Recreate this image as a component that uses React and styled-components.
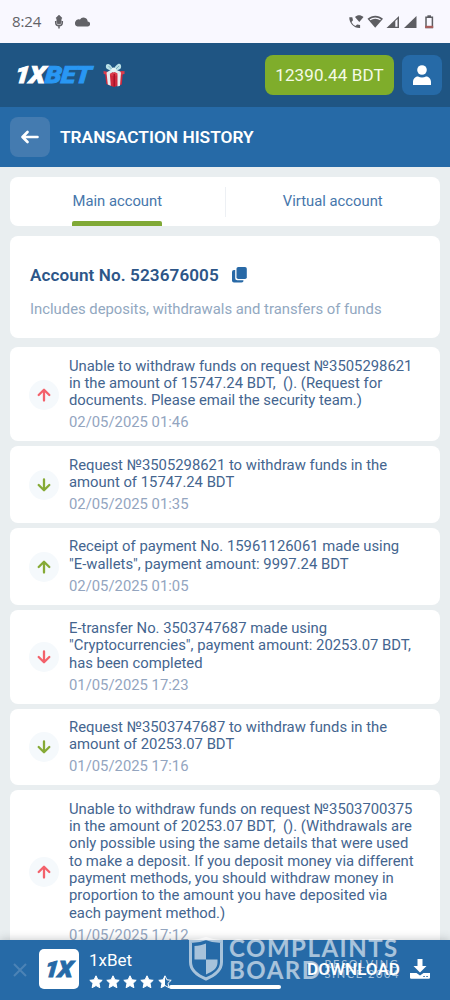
import React from "react";
import styled, { createGlobalStyle } from "styled-components";

const GlobalStyle = createGlobalStyle`
  * { box-sizing: border-box; }
  body { margin: 0; font-family: Roboto, "Liberation Sans", sans-serif; }
`;

const Screen = styled.div`
  position: relative;
  display: flex;
  flex-direction: column;
  width: 450px;
  height: 1000px;
  overflow: hidden;
  background: #e9eef0;
`;

const StatusBar = styled.div`
  flex: none;
  display: flex;
  align-items: center;
  height: 43px;
  padding: 1px 15px 0 12px;
  background: #f9f8ff;
  color: #626267;
`;

const Clock = styled.span`
  width: 42px;
  font: 400 15px/20px "Open Sans", sans-serif;
  letter-spacing: -0.1px;
  padding-bottom: 2px;
`;

const StatusIcons = styled.div`
  display: flex;
  align-items: center;
  gap: ${(p) => p.$gap}px;
  margin-left: ${(p) => (p.$end ? "auto" : "0")};
`;

const Header = styled.header`
  flex: none;
  display: flex;
  align-items: center;
  height: 64px;
  padding: 0 8px 0 15px;
  background: #1f5583;
`;

const Brand = styled.div`
  width: 88px;
  color: #fff;
  font-size: 23.5px;
  font-style: italic;
  font-weight: 900;
  line-height: 28px;
  letter-spacing: -0.4px;
  -webkit-text-stroke: 0.9px currentColor;
  white-space: nowrap;
  transform: scaleX(1.12) skewX(-5deg);
  transform-origin: left center;
`;

const BrandAccent = styled.span`
  color: #2997f3;
`;

const Balance = styled.div`
  display: flex;
  align-items: center;
  justify-content: center;
  width: 129px;
  height: 40px;
  margin-left: auto;
  border-radius: 8px;
  background: #7fad2b;
  color: #f4fae6;
  font-size: 17px;
  letter-spacing: 0.1px;
`;

const SquareButton = styled.button`
  display: flex;
  align-items: center;
  justify-content: center;
  width: 40px;
  height: 40px;
  margin: ${(p) => p.$margin};
  padding: 0;
  border: 0;
  border-radius: 8px;
  background: ${(p) => p.$bg};
`;

const TitleBar = styled.div`
  flex: none;
  display: flex;
  align-items: center;
  height: 60px;
  padding: 0 10px;
  background: #266aa7;
`;

const Title = styled.h1`
  margin: 0;
  color: #fff;
  font-size: 17.3px;
  font-weight: 600;
`;

const Content = styled.main`
  flex: 1;
  min-height: 0;
  padding: 10px 10px 0;
  overflow: hidden;
`;

const Tabs = styled.div`
  display: flex;
  height: 49px;
  border-radius: 8px;
  background: #fff;
`;

const Tab = styled.div`
  display: flex;
  flex: 1;
  flex-direction: column;
  align-items: center;
  color: #4676ab;
  font-size: 14.8px;
  line-height: 49px;
`;

const TabLabel = styled.span`
  position: relative;
  height: 49px;
  &::after {
    content: "";
    position: absolute;
    right: 0;
    bottom: 0;
    left: 0;
    height: 5px;
    border-radius: 2px 2px 0 0;
    background: ${(p) => (p.$active ? "#80a936" : "transparent")};
  }
`;

const Divider = styled.i`
  width: 1px;
  height: 30px;
  margin-top: 10px;
  background: #edf0f4;
`;

const AccountCard = styled.section`
  height: 102px;
  margin: 10px 0 9px;
  padding: 29px 20px 0;
  border-radius: 8px;
  background: #fff;
`;

const AccountNumber = styled.div`
  display: flex;
  align-items: center;
  gap: 13px;
  height: 20px;
  color: #2d5688;
  font-size: 17.1px;
  font-weight: 600;
  letter-spacing: 0.1px;
`;

const AccountNote = styled.div`
  margin-top: 14px;
  color: #92a8c1;
  font-size: 14.83px;
  line-height: 20px;
  white-space: nowrap;
`;

const List = styled.div`
  display: flex;
  flex-direction: column;
  gap: 5px;
`;

const Row = styled.article`
  display: flex;
  align-items: center;
  padding: 10.5px 0 9.5px 19px;
  border-radius: 8px;
  background: #fff;
`;

const Badge = styled.div`
  display: flex;
  flex: none;
  align-items: center;
  justify-content: center;
  width: 30px;
  height: 30px;
  margin-right: 10px;
  border-radius: 50%;
  background: #f5f9fc;
`;

const Message = styled.div`
  color: #44658f;
  font-size: 14.84px;
  line-height: 17.32px;
  white-space: pre;
`;

const Stamp = styled.div`
  margin-top: 4.8px;
  color: #93a5bf;
  font-size: 14.84px;
  line-height: 17.32px;
`;

const Banner = styled.footer`
  position: relative;
  flex: none;
  display: flex;
  align-items: flex-start;
  height: 60px;
  padding: 10px 20px 0 12px;
  background: #266aa7;
  box-shadow: 0 0 9px rgba(60, 65, 70, 0.32);
`;

const AppIcon = styled.div`
  display: flex;
  align-items: center;
  justify-content: center;
  width: 40px;
  height: 40px;
  margin: -1px 10px 0 11px;
  border-radius: 5px;
  background: #fff;
`;

const AppMark = styled.span`
  color: #266aa7;
  font-size: 22.5px;
  font-style: italic;
  font-weight: 900;
  line-height: 1;
  letter-spacing: -0.6px;
  -webkit-text-stroke: 0.9px currentColor;
  transform: scaleX(1.08) skewX(-5deg);
`;

const AppName = styled.div`
  height: 21px;
  color: #fff;
  font-size: 17px;
  line-height: 21px;
`;

const Stars = styled.div`
  display: flex;
  gap: 3.3px;
  margin-top: 4px;
  margin-left: -0.5px;
`;

const Download = styled.div`
  display: flex;
  align-items: center;
  gap: 10px;
  height: 38px;
  margin-left: auto;
  color: #fff;
  font-size: 17.1px;
  font-weight: 600;
`;

const HomeHandle = styled.div`
  position: absolute;
  left: 169px;
  bottom: 11px;
  width: 112px;
  height: 4px;
  border-radius: 2px;
  background: #fff;
`;

const Watermark = styled.div`
  position: absolute;
  left: 188px;
  top: -3px;
  display: flex;
  gap: 5px;
  color: #fff;
  opacity: 0.6;
`;

const WatermarkName = styled.div`
  font: 700 24px/21.5px Lato, sans-serif;
  letter-spacing: 1.5px;
  white-space: nowrap;
`;

const WatermarkLine = styled.div`
  display: flex;
`;

const WatermarkTag = styled.div`
  margin-left: 3px;
  font: 400 11px/10px Lato, sans-serif;
  letter-spacing: 1.55px;
`;

const WatermarkTagLine = styled.div`
  height: 10px;
  letter-spacing: ${(p) => p.$spacing}px;
`;

const Dismiss = () => (
  <svg width="16" height="16" viewBox="0 0 16 16" style={{ marginTop: 12 }}>
    <path d="M2 2l12 12M14 2L2 14" stroke="#4c83b6" strokeWidth="2" />
  </svg>
);

const Arrow = ({ up, color }) => (
  <svg width="14" height="14" viewBox="0 0 14 14" fill="none" stroke={color} strokeWidth="2.3" strokeLinecap="round" strokeLinejoin="round">
    <path d={up ? "M7 12.500V2M1.700 7L7 1.700L12.300 7" : "M7 1.500V12M1.700 7L7 12.300L12.300 7"} />
  </svg>
);

const Mic = () => (
  <svg width="10" height="14" viewBox="0 0 10 14" fill="none" stroke="#626267">
    <rect x="3" y="2" width="4" height="7" rx="2" fill="#626267" />
    <path d="M2.200 3.500L5 .8L7.800 3.500M1.700 6v1.500a3.300 3.200 0 0 0 6.600 0V6M5 10v3.500" strokeWidth="1.500" />
  </svg>
);

const Cloud = () => (
  <svg width="15" height="10" viewBox="0 0 15 10" fill="#626267">
    <path d="M2.500 9.500h10a2.500 2.500 0 0 0 .2-5A4.200 4.200 0 0 0 5 2.500 3.600 3.600 0 0 0 2.500 9.500z" />
  </svg>
);

const Signals = () => (
  <svg width="86" height="17" viewBox="0 0 86 17" fill="#5d5d62">
    <path d="M.3 3.300h3l.7 3-1.500 1.600c1 2 2 3 4 4l1.600-1.500 3 .7v3C5 14.500 0 9 .3 3.300z" />
    <path d="M6 3c2.500-2.300 5.500-2.300 8.500 0L10.300 8z" />
    <path d="M18.500 4.800c4.800-4.200 10.800-4.200 15.500 0L26.200 13.800z" />
    <path d="M21 5.800c3-2.300 7.500-2.300 10.500 0" fill="none" stroke="#f9f8ff" strokeWidth="1.200" />
    <path d="M37.500 14L50 2v12z" />
    <path d="M46.300 7L48.500 4.900v7.900h-2.200z" fill="#f9f8ff" />
    <path d="M55 14L67.500 2v12z" />
    <path d="M77 3.200h6.400v10.300h-6.400z" fill="none" stroke="#5d5d62" strokeWidth="1.500" />
    <path d="M78.400 1.300h3.600v2h-3.600z" />
    <path d="M76.200 11.800h8v2.300h-8z" fill="#a75d5b" />
  </svg>
);

const Gift = () => (
  <svg width="22" height="25" viewBox="0 0 22 25">
    <path d="M2 10l18-2-1.200 13.500-8 2.500-7.500-3z" fill="#cf293d" />
    <path d="M.5 8L10.500 10 21.500 8v3L10.800 13 .7 11z" fill="#dc3c4c" />
    <path d="M3.500 9.500l3.300.8 1 12.500-3-1.200zM14.500 10l3.500-.8-1 13.500-2.500.8z" fill="#e8edf2" />
    <path d="M10.500 11v13l1.500-.4V11z" fill="#a8142a" />
    <path d="M10.500 7.500C8-.5 2-.5 3 4.500 4 7.500 8 6.500 10.500 8.500c2.500-2 7-1 7.500-4C19-1 13-.500 10.500 7.500z" fill="#b9e0e6" />
    <path d="M10.500 7L4.500 10.500M10.500 7l6.500 3" stroke="#deeff2" strokeWidth="2.800" />
    <circle cx="10.700" cy="7" r="2.400" fill="#e5f5f6" />
    <path d="M5.500 3l3 3M16 3l-3 3" stroke="#7dafbf" />
  </svg>
);

const User = () => (
  <svg width="18" height="20" viewBox="0 0 18 20" fill="#fff">
    <circle cx="9" cy="5" r="4.800" />
    <path d="M0 20v-3c0-3 2-5.500 5-5.500 2.500 1.200 5.500 1.200 8 0 3 0 5 2.500 5 5.500v3z" />
  </svg>
);

const Back = () => (
  <svg width="18" height="14" viewBox="0 0 18 14" fill="none" stroke="#fff" strokeWidth="2.600" strokeLinecap="round" strokeLinejoin="round">
    <path d="M16.500 7H1.800M6.500 2L1.500 7 6.500 12" />
  </svg>
);

const Copy = () => (
  <svg width="15" height="16" viewBox="0 0 15 16" fill="#2869a6">
    <rect x="4.500" y="0" width="10.300" height="12" rx="1.800" />
    <path d="M3.200 3H2A2 2 0 0 0 0 5v8.500A2 2 0 0 0 2 15.500h7.500a2 2 0 0 0 2-2.200H5.200a2 2 0 0 1-2-2z" />
  </svg>
);

const STAR = "M7 .8l1.900 4 4.300.5-3.200 3 .9 4.400L7 10.500l-3.900 2.200.9-4.400-3.200-3 4.300-.5z";

const Star = ({ half }) => (
  <svg width="14" height="14" viewBox="0 0 14 14">
    <path d={STAR} fill={half ? "none" : "#fff"} stroke="#fff" strokeWidth="1" strokeLinejoin="round" />
    {half && <path d="M7 .8v9.700l-3.900 2.200.9-4.400-3.200-3 4.300-.5z" fill="#fff" />}
  </svg>
);

const DownloadIcon = () => (
  <svg width="20" height="20" viewBox="0 0 20 20" fill="#fff">
    <path d="M7.500 0h5v7H16.500L10 13.500 3.500 7h4z" />
    <path d="M0 14h6.500l3.500 2.500 3.500-2.500H20V18.500a1.300 1.300 0 0 1-1.300 1.300H1.300A1.300 1.300 0 0 1 0 18.500z" />
    <path d="M13.300 17.500h1.500M16.300 17.500h1.500" stroke="#266aa7" strokeWidth="1.200" />
  </svg>
);

const Shield = () => (
  <svg width="36" height="45" viewBox="0 0 36 45">
    <path d="M18 1.500C12 4 7 4.500 2.500 4.500V25c0 9 7 13.500 15.500 17 8.500-3.500 15.500-8 15.500-17V4.500C29 4.500 24 4 18 1.500z" fill="none" stroke="#fff" strokeWidth="3" />
    <path d="M18 6.500v16H6.500V9C11 9 14 8 18 6.500zM18 22.500h11.500v3c0 6-5 9-11.500 12z" fill="#fff" />
  </svg>
);

const RED = "#f3616b";
const GREEN = "#86aa36";

const transactions = [
  { up: true, color: RED, date: "02/05/2025 01:46", text: "Unable to withdraw funds on request №3505298621\nin the amount of 15747.24 BDT,  (). (Request for\ndocuments. Please email the security team.)" },
  { up: false, color: GREEN, date: "02/05/2025 01:35", text: "Request №3505298621 to withdraw funds in the\namount of 15747.24 BDT" },
  { up: true, color: GREEN, date: "02/05/2025 01:05", text: "Receipt of payment No. 15961126061 made using\n\"E-wallets\", payment amount: 9997.24 BDT" },
  { up: false, color: RED, date: "01/05/2025 17:23", text: "E-transfer No. 3503747687 made using\n\"Cryptocurrencies\", payment amount: 20253.07 BDT,\nhas been completed" },
  { up: false, color: GREEN, date: "01/05/2025 17:16", text: "Request №3503747687 to withdraw funds in the\namount of 20253.07 BDT" },
  { up: true, color: RED, date: "01/05/2025 17:12", text: "Unable to withdraw funds on request №3503700375\nin the amount of 20253.07 BDT,  (). (Withdrawals are\nonly possible using the same details that were used\nto make a deposit. If you deposit money via different\npayment methods, you should withdraw money in\nproportion to the amount you have deposited via\neach payment method.)" },
];

export default function App() {
  return (
    <>
      <GlobalStyle />
      <Screen>
        <StatusBar>
          <Clock>8:24</Clock>
          <StatusIcons $gap={11}><Mic /><Cloud /></StatusIcons>
          <StatusIcons $end><Signals /></StatusIcons>
        </StatusBar>
        <Header>
          <Brand>1X<BrandAccent>BET</BrandAccent></Brand>
          <Gift />
          <Balance>12390.44 BDT</Balance>
          <SquareButton $bg="#266aa7" $margin="0 0 0 8px" aria-label="Profile"><User /></SquareButton>
        </Header>
        <TitleBar>
          <SquareButton $bg="#447bb0" $margin="0 10px 0 0" aria-label="Back"><Back /></SquareButton>
          <Title>TRANSACTION HISTORY</Title>
        </TitleBar>
        <Content>
          <Tabs>
            <Tab><TabLabel $active>Main account</TabLabel></Tab>
            <Divider />
            <Tab><TabLabel>Virtual account</TabLabel></Tab>
          </Tabs>
          <AccountCard>
            <AccountNumber>Account No. 523676005 <Copy /></AccountNumber>
            <AccountNote>Includes deposits, withdrawals and transfers of funds</AccountNote>
          </AccountCard>
          <List>
            {transactions.map((t) => (
              <Row key={t.date}>
                <Badge><Arrow up={t.up} color={t.color} /></Badge>
                <div>
                  <Message>{t.text}</Message>
                  <Stamp>{t.date}</Stamp>
                </div>
              </Row>
            ))}
          </List>
        </Content>
        <Banner>
          <Dismiss />
          <AppIcon><AppMark>1X</AppMark></AppIcon>
          <div>
            <AppName>1xBet</AppName>
            <Stars><Star /><Star /><Star /><Star /><Star half /></Stars>
          </div>
          <Download>DOWNLOAD <DownloadIcon /></Download>
          <HomeHandle />
          <Watermark>
            <Shield />
            <WatermarkName>
              COMPLAINTS
              <WatermarkLine>
                BOARD
                <WatermarkTag>
                  <WatermarkTagLine $spacing={1.7}>RESOLVING</WatermarkTagLine>
                  <WatermarkTagLine $spacing={1.6}>SINCE 2004</WatermarkTagLine>
                </WatermarkTag>
              </WatermarkLine>
            </WatermarkName>
          </Watermark>
        </Banner>
      </Screen>
    </>
  );
}
